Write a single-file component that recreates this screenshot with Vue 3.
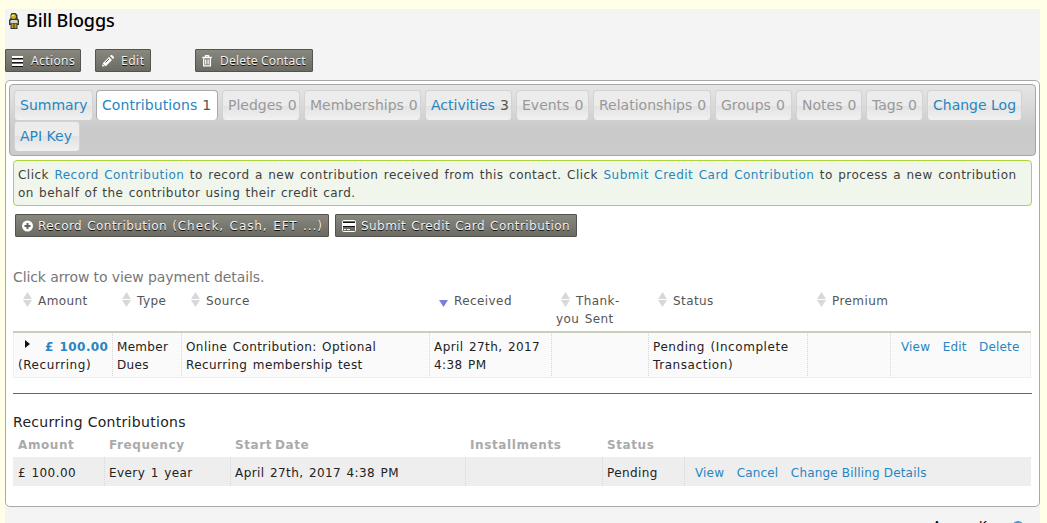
<script setup>
const tabs = [
  { label: 'Summary', width: 79, live: true },
  { label: 'Contributions', count: 1, width: 122, live: true, active: true },
  { label: 'Pledges', count: 0, width: 78 },
  { label: 'Memberships', count: 0, width: 117 },
  { label: 'Activities', count: 3, width: 87, live: true },
  { label: 'Events', count: 0, width: 73 },
  { label: 'Relationships', count: 0, width: 118 },
  { label: 'Groups', count: 0, width: 77 },
  { label: 'Notes', count: 0, width: 66 },
  { label: 'Tags', count: 0, width: 57 },
  { label: 'Change Log', width: 95, live: true },
  { label: 'API Key', width: 66, live: true },
]
const heads = [
  { label: 'Amount', width: 100 },
  { label: 'Type', width: 69 },
  { label: 'Source', width: 248 },
  { label: 'Received', width: 122, sorted: true },
  { label: 'Thank-', rest: 'you Sent', width: 97 },
  { label: 'Status', width: 159 },
  { label: 'Premium', width: 83 },
]
const recurringHeads = [
  { label: 'Amount', width: 92 },
  { label: 'Frequency', width: 126 },
  { label: 'Start Date', width: 235 },
  { label: 'Installments', width: 137 },
  { label: 'Status', width: 82 },
]
</script>

<template>
  <div class="page">
    <div class="sheet">
      <h1 class="title">
        <svg class="person" width="12" height="17" viewBox="0 0 12 17">
          <path d="M3.500 0h4l2 2v3l1.500 2v5H9.500v4h-7v-4H1V7l1.500-2V2z" fill="#38382f" />
          <circle cx="5.500" cy="3.500" r="2.500" fill="#c9b51e" />
          <path d="M4 2h2v1H4z" fill="#fff15c" />
          <path d="M3 7h6v3H3z" fill="#d4d4d4" />
          <path d="M2 7.500h1v3H2zM9 7.500h1v3H9z" fill="#999" />
          <path d="M3.500 10.500h2v4.500h-2zM6.500 10.500h2v4.500h-2z" fill="#b8a01a" />
        </svg>
        <span>Bill Bloggs</span>
      </h1>

      <div class="actions">
        <a class="btn menu">
          <svg width="12" height="12" viewBox="0 0 12 12"><path d="M0 2h11M0 6h11M0 10h11" stroke="#111" stroke-width="2" transform="translate(0 1)" /><path d="M0 2h11M0 6h11M0 10h11" stroke="#fff" stroke-width="2" /></svg>
          <span>Actions</span>
        </a>
        <a class="btn edit">
          <svg width="12" height="12" viewBox="0 0 12 12"><path d="M0 11.500L1 8 7 2l3 3-6 6zM8 1l1-1 1 0 2 2v1l-1 1z" fill="#fff" /><path d="M1.500 9.500l1 1M3.500 7.500l3.500-3.500" stroke="#55554f" /></svg>
          <span>Edit</span>
        </a>
        <a class="btn delete">
          <svg width="11" height="12" viewBox="0 0 11 12"><path d="M3.500 2V.7h3V2M.3 2.500h9.500M1.700 3.500v7.300h6.700V3.500" fill="none" stroke="#fff" stroke-width="1.300" /><path d="M3.500 4.500v5M5.100 4.500v5M6.700 4.500v5" stroke="#fff" stroke-width=".9" /></svg>
          <span>Delete Contact</span>
        </a>
      </div>

      <main class="panel">
        <nav class="tabs">
          <a v-for="t in tabs" :key="t.label" class="tab" :class="{ live: t.live, active: t.active }" :style="{ width: t.width + 'px' }">
            <span>{{ t.label }}</span><em v-if="t.count !== undefined">{{ t.count }}</em>
          </a>
        </nav>

        <p class="help">
          <span class="line">Click <a>Record Contribution</a> to record a new contribution received from this contact. Click <a>Submit Credit Card Contribution</a> to process a new contribution</span>
          <span class="line second">on behalf of the contributor using their credit card.</span>
        </p>

        <div class="record">
          <a class="btn wide">
            <svg width="12" height="12" viewBox="0 0 12 12"><circle cx="5.500" cy="6" r="5.500" fill="#fff" /><path d="M5.500 3v6M2.500 6h6" stroke="#62625b" stroke-width="2" /></svg>
            <span>Record Contribution <span class="kinds">(Check, Cash, EFT ...)</span></span>
          </a>
          <a class="btn wide card">
            <svg width="14" height="12" viewBox="0 0 14 12"><rect x=".5" y=".5" width="13" height="11" rx="1" fill="#6c6c65" stroke="#fff" /><path d="M1 4.500h12" stroke="#fff" stroke-width="3" /><path d="M1 2.500h12M1 6.500h12" stroke="#111" /><path d="M2 9.500h2M5 9.500h3" stroke="#fff" /></svg>
            <span>Submit Credit Card Contribution</span>
          </a>
        </div>

        <p class="hint">Click arrow to view payment details.</p>

        <table class="grid">
          <colgroup><col v-for="h in heads" :key="h.label" :style="{ width: h.width + 'px' }" /><col /></colgroup>
          <thead>
            <tr>
              <th v-for="h in heads" :key="h.label">
                <svg class="sort" width="9" height="15" viewBox="0 0 9 15">
                  <path v-if="h.sorted" d="M0 8h9l-4.500 7z" fill="#7c7fe0" />
                  <path v-else d="M4.500 0L9 7H0zM0 8h9l-4.500 7z" fill="#d8d8d8" />
                </svg><span>{{ h.label }}</span><template v-if="h.rest"><br />{{ h.rest }}</template>
              </th>
              <th></th>
            </tr>
          </thead>
          <tbody>
            <tr>
              <td><svg class="caret" width="5" height="8" viewBox="0 0 5 8"><path d="M0 0l5 4-5 4z" fill="#111" /></svg><b class="money">£ 100.00</b><br /><span class="cycle">(Recurring)</span></td>
              <td class="tight">Member<br />Dues</td>
              <td>Online Contribution: Optional<br />Recurring membership test</td>
              <td>April 27th, 2017<br />4:38 PM</td>
              <td></td>
              <td class="status">Pending (Incomplete<br />Transaction)</td>
              <td></td>
              <td><div class="links"><a>View</a><a>Edit</a><a>Delete</a></div></td>
            </tr>
          </tbody>
        </table>

        <div class="rule"></div>

        <h2 class="subtitle">Recurring Contributions</h2>
        <table class="recurring">
          <colgroup><col v-for="h in recurringHeads" :key="h.label" :style="{ width: h.width + 'px' }" /><col /></colgroup>
          <thead>
            <tr><th v-for="h in recurringHeads" :key="h.label">{{ h.label }}</th><th></th></tr>
          </thead>
          <tbody>
            <tr>
              <td>£ 100.00</td>
              <td>Every 1 year</td>
              <td>April 27th, 2017 4:38 PM</td>
              <td></td>
              <td>Pending</td>
              <td><div class="links"><a>View</a><a>Cancel</a><a>Change Billing Details</a></div></td>
            </tr>
          </tbody>
        </table>
      </main>

      <footer class="foot"><span>Access Keys:</span><i class="info"></i></footer>
    </div>
  </div>
</template>

<style>
html, body { margin: 0; overflow: hidden; background: #ffffe8; }
</style>

<style scoped>
* { box-sizing: border-box; }
.page {
  width: 1047px; height: 523px; overflow: hidden; padding: 9px 7px 0 5px;
  background: #ffffe8; color: #222;
  font-family: "DejaVu Sans", Verdana, sans-serif; font-size: 12px; line-height: 18px; letter-spacing: .2px;
}
.sheet { width: 1035px; height: 514px; background: #f4f4f4; overflow: hidden; }
.title {
  display: flex; align-items: center; gap: 6px; height: 24px; margin: 0; padding-left: 3px;
  font: 500 18px/24px "Noto Sans", "Open Sans", sans-serif; letter-spacing: -.1px; color: #000;
}
.title span { position: relative; top: -1px; }
.actions { display: flex; margin-top: 16px; height: 23px; }
a { color: #2786c2; }
.btn {
  display: flex; align-items: center; height: 23px; padding: 0 6px; white-space: nowrap;
  border: 1px solid #54544e; border-radius: 1px; color: #f2f2f2;
  background: linear-gradient(#88887f, #6b6b63); text-shadow: 0 1px 0 #111;
  font: 12px/20px "Noto Sans", sans-serif; letter-spacing: .5px;
}
.btn svg { flex: none; margin-right: 7px; }
.menu { width: 76px; }
.edit { width: 56px; margin-left: 14px; }
.menu { letter-spacing: .4px; }
.delete { width: 118px; margin-left: 44px; letter-spacing: .2px; }
.panel {
  height: 427px; margin-top: 8px; padding: 3px 3px 0; background: #fff;
  border: 1px solid #a9a9a9; border-radius: 5px;
}
.tabs {
  display: flex; flex-wrap: wrap; align-content: flex-start; column-gap: 4px; row-gap: 1px;
  height: 72px; padding: 5px 4px 0; border: 1px solid #a6a6a6; border-radius: 4px;
  background: linear-gradient(#e5e5e5, #dadada 20px, #cacaca 44px, #cbcbcb);
}
.tab {
  display: flex; gap: 5px; height: 30px; padding: 0 0 0 5px; font-size: 14px; line-height: 28px; letter-spacing: 0;
  white-space: nowrap; color: #999; border: 1px solid #d3d3d3; border-bottom: 0; border-radius: 4px;
  background: linear-gradient(#ececec 50%, #e2e2e2 50%, #f1f1f1);
}
.tab:first-child { margin-right: -1px; }
.tab em { font-style: normal; }
.live { color: #2786c2; }
.live em { color: #555; }
.active { background: #fff; border-color: #aaa; letter-spacing: .08px; }
.help {
  height: 46px; margin: 4px 4px 0; padding: 5px 4px 0; color: #3e3e3e;
  background: #f0f6eb; border: 1px solid #acd536; border-radius: 4px;
  letter-spacing: .47px; word-spacing: 1.2px;
}
.second { letter-spacing: .45px; word-spacing: 1px; }
.line { display: block; white-space: nowrap; }
.record { display: flex; gap: 6px; margin: 8px 6px 0; }
.wide { width: 314px; font-family: "DejaVu Sans", sans-serif; letter-spacing: .45px; word-spacing: .8px; }
.kinds { letter-spacing: .92px; }
.wide svg { margin-right: 4px; }
.card { width: 242px; }
.card svg { margin-right: 5px; }
.hint { margin: 30px 4px 0; font-size: 14px; line-height: 20px; letter-spacing: -.1px; color: #777; }
table { table-layout: fixed; border-collapse: separate; border-spacing: 0; margin: 0 4px; width: 1018px; letter-spacing: .42px; word-spacing: 1.2px; }
th, td { text-align: left; vertical-align: top; font-weight: normal; white-space: nowrap; }
.grid th { height: 46px; padding: 5px 4px 0; color: #555; border-bottom: 2px solid #c9cdb9; }
.grid th:first-child { padding-left: 5px; }
.sort { margin: 0 6px 0 5px; vertical-align: -2px; }
.grid td { height: 45px; padding: 5px 4px 0; background: #fafafa; border-bottom: 1px solid #eee; border-right: 1px dotted #d5d5d5; }
.grid td:first-child { border-left: 1px solid #eee; }
.grid td:last-child { border-right: 1px solid #eee; }
.tight { letter-spacing: .3px; }
.status, .cycle { letter-spacing: .57px; }
.caret { margin: 0 15px 0 7px; vertical-align: 3px; }
.money { color: #2786c2; }
.links { display: flex; gap: 12.500px; padding-left: 6px; letter-spacing: .17px; word-spacing: 0; }
.rule { height: 1px; margin: 15px 4px 0; background: #666; }
.subtitle { margin: 18px 4px 0; font-size: 14px; line-height: 20px; font-weight: normal; letter-spacing: .3px; }
.recurring th { height: 25px; padding: 4px 4px 0; font-weight: bold; color: #aaa; letter-spacing: .6px; word-spacing: -2px; }
.recurring td { height: 29px; padding: 7px 4px 0; background: #eee; border-right: 1px dotted #d5d5d5; }
.recurring th:first-child, .recurring td:first-child { padding-left: 5px; }
.recurring td:last-child { border-right: 0; }
.foot { display: flex; justify-content: flex-end; margin-top: 10px; padding-right: 16px; color: #000; }
.info { width: 12px; height: 12px; margin-top: 4px; border-radius: 6px; background: #4a98ce; }
</style>
